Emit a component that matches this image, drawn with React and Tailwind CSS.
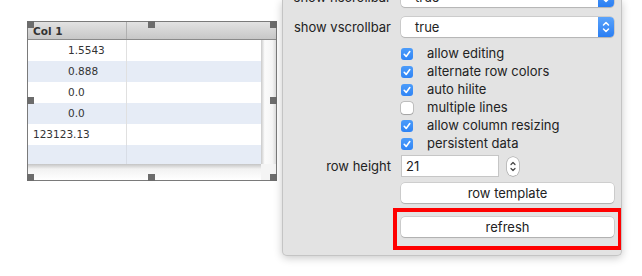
import React from "react";

const Handle = ({ cls }) => (
  <div className={`absolute w-[7px] h-[7px] bg-[#6c6c6c] ${cls}`} />
);

const rows = [
  { v: "1.5543", pl: "pl-[40px]", alt: false },
  { v: "0.888", pl: "pl-[40px]", alt: true },
  { v: "0.0", pl: "pl-[40px]", alt: false },
  { v: "0.0", pl: "pl-[40px]", alt: true },
  { v: "123123.13", pl: "pl-[5px]", alt: false },
];

function Table() {
  return (
    <div className="relative w-[250px] h-[160px] border border-[#7a7a7a] bg-white flex flex-col" style={{ fontFamily: '"DejaVu Sans", sans-serif' }}>
      <div className="h-[18px] flex border-b border-[#8a8a8a] bg-[linear-gradient(#e2e2e2,#c7c7c7)] shrink-0">
        <div className="w-[99px] border-r border-[#b0b0b0] pl-[5px] text-[10.5px] font-bold text-[#333] leading-[18px]">Col 1</div>
        <div className="flex-1" />
      </div>
      <div className="flex flex-1">
        <div className="w-[233px] flex flex-col">
          {rows.map((r, i) => (
            <div key={i} className={`h-[21px] flex ${r.alt ? "bg-[#e6ecf6]" : "bg-white"}`}>
              <div className={`w-[99px] border-r border-[#e0e0e0] ${r.pl} text-[10.5px] text-[#333] leading-[21px] whitespace-nowrap`}>{r.v}</div>
              <div className="flex-1" />
            </div>
          ))}
          <div className="h-[19px] flex bg-[#e6ecf6]">
            <div className="w-[99px] border-r border-[#d8dde6]" />
            <div className="flex-1" />
          </div>
          <div className="flex-1 bg-[linear-gradient(#c4c4c4,#f2f2f2_5px,#ffffff)]" />
        </div>
        <div className="flex-1 flex flex-col">
          <div className="flex-1 bg-[linear-gradient(to_right,#c9c9c9,#fbfbfb_25%,#f5f5f5_75%,#dedede)]" />
          <div className="h-[16px] bg-[#f4f4f4]" />
        </div>
      </div>
      <Handle cls="-left-px -top-px" />
      <Handle cls="left-[120px] -top-px" />
      <Handle cls="-right-px -top-px" />
      <Handle cls="-left-px top-[75px]" />
      <Handle cls="-right-px top-[75px]" />
      <Handle cls="-left-px -bottom-px" />
      <Handle cls="left-[120px] -bottom-px" />
      <Handle cls="-right-px -bottom-px" />
    </div>
  );
}

const Select = ({ value }) => (
  <div className="h-[20px] w-[213px] flex rounded-[4px] bg-white shadow-[0_0_0_0.5px_rgba(0,0,0,0.2),0_1px_1px_rgba(0,0,0,0.12)]">
    <div className="flex-1 pl-[14px] leading-[20px] text-[13px] text-[#222]">{value}</div>
    <div className="w-[16px] h-[20px] rounded-r-[4px] bg-[linear-gradient(#5aa3fb,#2a7ef3)] flex items-center justify-center">
      <svg width="10" height="14" viewBox="0 0 10 14" fill="none" stroke="white" strokeWidth="1.5" strokeLinecap="round" strokeLinejoin="round">
        <path d="M2.5 5 L5 2.5 L7.5 5" />
        <path d="M2.5 9 L5 11.5 L7.5 9" />
      </svg>
    </div>
  </div>
);

const Check = ({ checked, label }) => (
  <div className="h-[18px] flex items-center">
    {checked ? (
      <div className="w-[12px] h-[12px] rounded-[3px] bg-[linear-gradient(#4c9cfa,#2f84f5)] flex items-center justify-center">
        <svg width="12" height="12" viewBox="0 0 12 12" fill="none" stroke="white" strokeWidth="1.6" strokeLinecap="round" strokeLinejoin="round">
          <path d="M3.2 6.3 L5.2 8.4 L8.8 3.6" />
        </svg>
      </div>
    ) : (
      <div className="w-[12px] h-[12px] rounded-[3px] bg-white shadow-[0_0_0_0.5px_rgba(0,0,0,0.3),0_0.5px_1px_rgba(0,0,0,0.15)]" />
    )}
    <span className="ml-[14px] text-[13px] text-[#222]">{label}</span>
  </div>
);

const Button = ({ children }) => (
  <div className="h-[20px] w-[213px] rounded-[4px] bg-white shadow-[0_0_0_0.5px_rgba(0,0,0,0.18),0_1px_1px_rgba(0,0,0,0.15)] text-center leading-[20px] text-[13px] text-[#222]">
    {children}
  </div>
);

function Panel() {
  return (
    <div className="relative w-[340px] h-[256px] bg-[#e3e3e3] border-x border-b border-[#c4c4c4] rounded-b-[5px] shadow-[0_2px_8px_rgba(0,0,0,0.22)] overflow-hidden">
      <div className="-mt-[13px] grid grid-cols-[108px_213px] gap-x-[10px] items-center">
        <div className="text-right text-[13px] text-[#222] leading-[20px]">show hscrollbar</div>
        <Select value="true" />
        <div className="h-[10px] col-span-2" />
        <div className="text-right text-[13px] text-[#222] leading-[20px]">show vscrollbar</div>
        <Select value="true" />
        <div className="h-[8px] col-span-2" />
        <div />
        <div className="flex flex-col">
          <Check checked label="allow editing" />
          <Check checked label="alternate row colors" />
          <Check checked label="auto hilite" />
          <Check checked={false} label="multiple lines" />
          <Check checked label="allow column resizing" />
          <Check checked label="persistent data" />
        </div>
        <div className="h-[2px] col-span-2" />
        <div className="text-right text-[13px] text-[#222] pt-[1px]">row height</div>
        <div className="flex items-center">
          <div className="w-[98px] h-[22px] bg-white border border-[#c6c6c6] pl-[4px] leading-[20px] text-[13px] text-[#222]">21</div>
          <div className="ml-[8px] w-[12px] h-[19px] rounded-full bg-white shadow-[0_0_0_0.5px_rgba(0,0,0,0.3),0_0.5px_1px_rgba(0,0,0,0.15)] flex items-center justify-center">
            <svg width="8" height="15" viewBox="0 0 8 15" fill="none" stroke="#444" strokeWidth="1.2" strokeLinecap="round" strokeLinejoin="round">
              <path d="M2 5.5 L4 3.5 L6 5.5" />
              <path d="M2 9.5 L4 11.5 L6 9.5" />
            </svg>
          </div>
        </div>
        <div className="h-[6px] col-span-2" />
        <div />
        <Button>row template</Button>
        <div className="h-[14px] col-span-2" />
        <div />
        <Button>refresh</Button>
      </div>
      <div className="absolute left-[110px] top-[208px] w-[229px] h-[42px] border-4 border-[#ff0000] pointer-events-none" />
    </div>
  );
}

export default function App() {
  return (
    <div className="w-[642px] h-[276px] bg-white flex overflow-hidden" style={{ fontFamily: 'Inter, "Liberation Sans", sans-serif' }}>
      <div className="w-[282px] pl-[27px] pt-[21px] shrink-0">
        <Table />
      </div>
      <Panel />
    </div>
  );
}
